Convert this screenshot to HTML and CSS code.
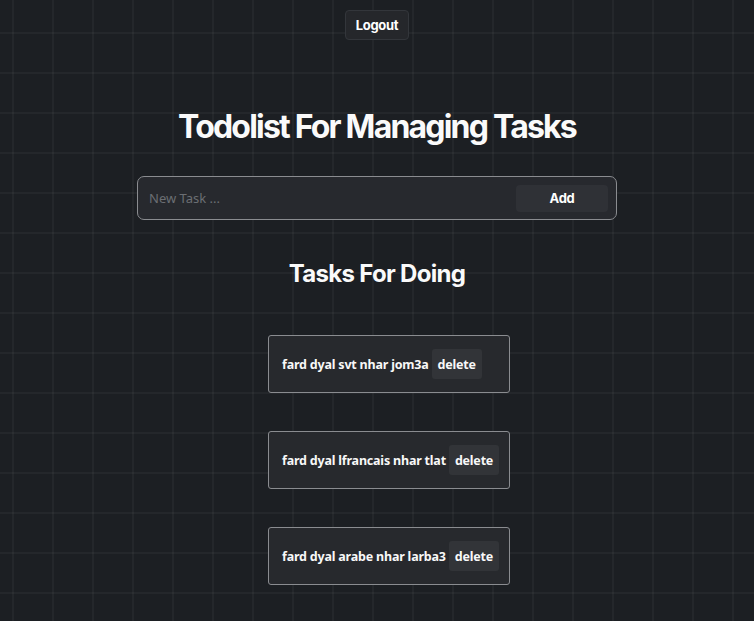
FILE: index.html
```html
<!DOCTYPE html>
<html lang="en">
<head>
<meta charset="utf-8">
<title>Todolist</title>
<link rel="stylesheet" href="styles.css">
</head>
<body>
<div class="page">
  <button class="logout">Logout</button>
  <h1 class="title">Todolist For Managing Tasks</h1>
  <form class="new-task" onsubmit="return false">
    <input class="new-task-input" type="text" placeholder="New Task ...">
    <button class="add-btn" type="submit">Add</button>
  </form>
  <h2 class="subtitle">Tasks For Doing</h2>
  <ul class="tasks">
    <li class="task"><span class="task-text">fard dyal svt nhar jom3a</span><button class="delete-btn">delete</button></li>
    <li class="task"><span class="task-text">fard dyal lfrancais nhar tlat</span><button class="delete-btn">delete</button></li>
    <li class="task"><span class="task-text">fard dyal arabe nhar larba3</span><button class="delete-btn">delete</button></li>
  </ul>
</div>
</body>
</html>
```
FILE: styles.css
```css
html, body {
  margin: 0;
  padding: 0;
}
body {
  min-height: 100vh;
  background-color: #1c1f23;
  background-image:
    linear-gradient(to right, rgba(255,255,255,0.035) 2px, transparent 2px),
    linear-gradient(to bottom, rgba(255,255,255,0.035) 2px, transparent 2px);
  background-size: 40px 40px;
  background-position: 12px 32px;
  color: #f2f2f2;
  font-family: "Noto Sans", "Open Sans", sans-serif;
}
.page {
  display: flex;
  flex-direction: column;
  align-items: center;
  padding-top: 10px;
}
.logout {
  height: 30px;
  padding: 0 10px;
  background: #25272b;
  border: 1px solid #33363b;
  border-radius: 4px;
  color: #fff;
  font-family: Inter, sans-serif;
  font-weight: 700;
  font-size: 13px;
  letter-spacing: -0.3px;
  cursor: pointer;
}
.title {
  margin: 67px 0 0;
  font-family: Inter, sans-serif;
  font-weight: 700;
  font-size: 32px;
  line-height: 40px;
  letter-spacing: -1.8px;
  color: #fafafa;
}
.new-task {
  box-sizing: border-box;
  margin-top: 29px;
  width: 480px;
  height: 44px;
  display: flex;
  align-items: center;
  padding: 0 8px 0 11px;
  background: #27292e;
  border: 1px solid #8a8c90;
  border-radius: 7px;
}
.new-task-input {
  flex: 1;
  min-width: 0;
  background: transparent;
  border: none;
  outline: none;
  color: #ddd;
  font-family: "Noto Sans", sans-serif;
  font-size: 13px;
  padding: 0;
}
.new-task-input::placeholder {
  color: #6b6e73;
}
.add-btn {
  width: 92px;
  height: 27px;
  background: #2f3136;
  border: none;
  border-radius: 4px;
  color: #fff;
  font-family: Inter, sans-serif;
  font-weight: 700;
  font-size: 13px;
  letter-spacing: -0.3px;
  cursor: pointer;
}
.subtitle {
  margin: 38px 0 0;
  font-family: Inter, sans-serif;
  font-weight: 700;
  font-size: 24px;
  line-height: 32px;
  letter-spacing: -0.7px;
  color: #fafafa;
}
.tasks {
  list-style: none;
  margin: 45px 0 0;
  padding: 0 0 0 24px;
  display: flex;
  flex-direction: column;
  gap: 38px;
}
.task {
  box-sizing: border-box;
  width: 242px;
  height: 58px;
  display: flex;
  align-items: center;
  gap: 3px;
  padding: 0 13px;
  background: #27292d;
  border: 1px solid #8a8c90;
  border-radius: 3px;
}
.task-text {
  font-weight: 700;
  font-size: 12.5px;
  letter-spacing: -0.2px;
  color: #f8f8f8;
  white-space: nowrap;
}
.delete-btn {
  height: 30px;
  padding: 0 6px;
  background: #323438;
  border: none;
  border-radius: 3px;
  color: #f8f8f8;
  font-family: "Noto Sans", sans-serif;
  font-weight: 700;
  font-size: 12.5px;
  letter-spacing: -0.2px;
  cursor: pointer;
}
```
